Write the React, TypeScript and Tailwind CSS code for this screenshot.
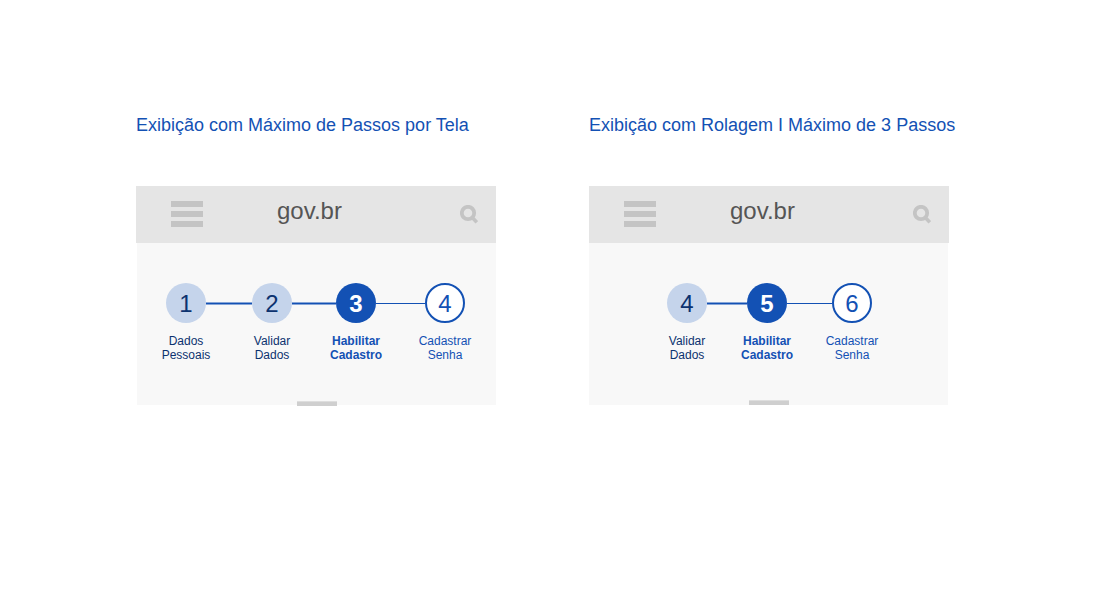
import React from "react";

type Status = "done" | "current" | "next";

interface Step {
  number: number;
  lines: [string, string];
  status: Status;
  connector?: string;
}

interface Panel {
  id: string;
  title: string;
  body: string;
  handle: string;
  steps: Step[];
}

const panels: Panel[] = [
  {
    id: "maximo",
    title: "Exibição com Máximo de Passos por Tela",
    body: "ml-px pl-[29px] pr-[31px]",
    handle: "-bottom-px",
    steps: [
      { number: 1, lines: ["Dados", "Pessoais"], status: "done", connector: "grow-46" },
      { number: 2, lines: ["Validar", "Dados"], status: "done", connector: "grow-44" },
      { number: 3, lines: ["Habilitar", "Cadastro"], status: "current", connector: "grow-49" },
      { number: 4, lines: ["Cadastrar", "Senha"], status: "next" },
    ],
  },
  {
    id: "rolagem",
    title: "Exibição com Rolagem I Máximo de 3 Passos",
    body: "mr-px pl-[78px] pr-[76px]",
    handle: "bottom-0",
    steps: [
      { number: 4, lines: ["Validar", "Dados"], status: "done", connector: "grow-40" },
      { number: 5, lines: ["Habilitar", "Cadastro"], status: "current", connector: "grow-45" },
      { number: 6, lines: ["Cadastrar", "Senha"], status: "next" },
    ],
  },
];

const circleStyle: Record<Status, string> = {
  done: "bg-[#c5d4eb] text-[#0c326f]",
  current: "bg-[#1351b4] font-bold text-white",
  next: "border-2 border-[#1351b4] bg-white text-[#1351b4]",
};

const labelStyle: Record<Status, string> = {
  done: "text-[#0c326f]",
  current: "font-bold text-[#1351b4]",
  next: "text-[#1351b4]",
};

function MenuIcon() {
  return (
    <svg width="32" height="26" viewBox="0 0 32 26" fill="#c4c4c4" aria-hidden="true">
      <rect width="32" height="6" />
      <rect y="10" width="32" height="6" />
      <rect y="20" width="32" height="6" />
    </svg>
  );
}

function SearchIcon() {
  return (
    <svg width="18" height="19" viewBox="0 0 18 19" fill="none" stroke="#c4c4c4" aria-hidden="true">
      <circle cx="8" cy="8" r="6.2" strokeWidth="3.8" />
      <path d="M11.5 11.8 L16.8 17.3" strokeWidth="3.6" />
    </svg>
  );
}

function Stepper({ steps }: { steps: Step[] }) {
  return (
    <ol className="flex items-start">
      {steps.map((step) => (
        <React.Fragment key={step.number}>
          <li className="w-10 shrink-0">
            <button
              type="button"
              aria-current={step.status === "current" ? "step" : undefined}
              className="flex w-full flex-col items-center gap-[11px]"
            >
              <span
                className={`flex size-10 items-center justify-center rounded-full pt-0.5 text-2xl leading-7 ${circleStyle[step.status]}`}
              >
                {step.number}
              </span>
              <span className={`text-center text-[12px] leading-[14px] whitespace-nowrap ${labelStyle[step.status]}`}>
                {step.lines[0]}
                <br />
                {step.lines[1]}
              </span>
            </button>
          </li>
          {step.connector && (
            <li
              aria-hidden="true"
              className={`basis-0 ${step.connector} ${
                step.status === "done"
                  ? "mt-[19px] h-[3px] border-y border-[#86a5d7] bg-[#1351b4]"
                  : "mt-5 h-px bg-[#1351b4]"
              }`}
            />
          )}
        </React.Fragment>
      ))}
    </ol>
  );
}

function Phone({ panel }: { panel: Panel }) {
  return (
    <section aria-labelledby={panel.id} className="w-full max-w-[360px]">
      <h2 id={panel.id} className="text-[18px] leading-6 whitespace-nowrap text-[#1351b4]">
        {panel.title}
      </h2>
      <header className="mt-[49px] flex h-[57px] items-start bg-[#e5e5e5] pr-[18px] pl-[35px]">
        <button type="button" aria-label="Menu" className="mt-[15px]">
          <MenuIcon />
        </button>
        <span className="mt-[11px] ml-[74px] text-2xl leading-7 text-[#555555]">gov.br</span>
        <button type="button" aria-label="Buscar" className="mt-[19px] ml-auto">
          <SearchIcon />
        </button>
      </header>
      <div className={`relative bg-[#f8f8f8] pt-10 pb-[43px] ${panel.body}`}>
        <Stepper steps={panel.steps} />
        <span
          className={`absolute left-1/2 h-[5px] w-10 -translate-x-1/2 border-t border-[#dedede] bg-[#cfcfcf] ${panel.handle}`}
        />
      </div>
    </section>
  );
}

export default function App() {
  return (
    <main className="min-h-screen bg-white font-['Liberation_Sans',Arial,sans-serif]">
      <div className="flex gap-[93px] pt-[113px] pr-10 pb-10 pl-[136px]">
        {panels.map((panel) => (
          <Phone key={panel.id} panel={panel} />
        ))}
      </div>
    </main>
  );
}
